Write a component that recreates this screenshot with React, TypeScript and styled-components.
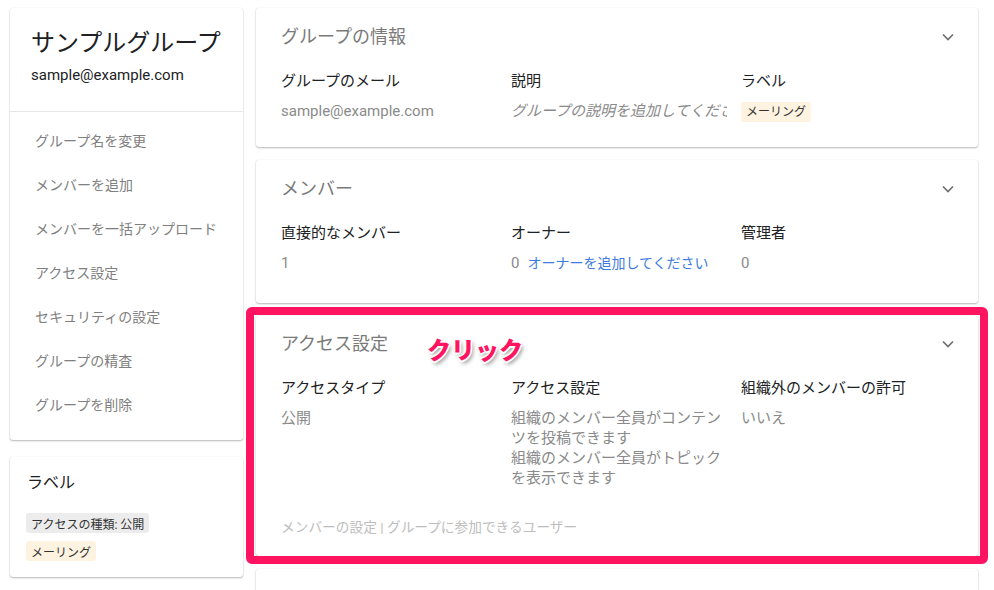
import React from "react";
import styled, { createGlobalStyle } from "styled-components";

const Global = createGlobalStyle`
  html, body { margin: 0; padding: 0; background: #ffffff; }
  body {
    font-family: Roboto, "Noto Sans CJK JP", "Noto Sans", sans-serif;
    color: #202124;
    width: 994px;
    height: 590px;
    overflow: hidden;
  }
  * { box-sizing: border-box; }
`;

const Page = styled.div`
  display: grid;
  grid-template-columns: 233px 722px;
  column-gap: 13px;
  padding: 8px 0 0 10px;
  align-items: start;
`;

const Column = styled.div<{ $gap: number }>`
  display: flex;
  flex-direction: column;
  gap: ${(p) => p.$gap}px;
`;

const Card = styled.div`
  position: relative;
  background: #fff;
  border-radius: 3px;
  box-shadow: 0 1px 2px rgba(0, 0, 0, 0.28), 0 0 1px rgba(0, 0, 0, 0.12);
`;

const GroupHeader = styled.div`
  padding: 19px 21px 26px;
  border-bottom: 1px solid #e6e6e6;
`;

const GroupTitle = styled.div`
  font-size: 24px;
  line-height: 32px;
  color: #202124;
`;

const GroupEmail = styled.div`
  margin-top: 6px;
  font-size: 15px;
  line-height: 20px;
  color: #202124;
`;

const Menu = styled.div`
  display: flex;
  flex-direction: column;
  padding: 6px 0 14px;
`;

const MenuItem = styled.div`
  height: 44px;
  display: flex;
  align-items: center;
  padding-left: 25px;
  font-size: 14px;
  color: #808080;
`;

const LabelCard = styled(Card)`
  padding: 16px 16px 16px;
`;

const LabelTitle = styled.div`
  font-size: 16px;
  line-height: 20px;
  margin-left: 1px;
  color: #202124;
`;

const ChipList = styled.div`
  display: flex;
  flex-direction: column;
  align-items: flex-start;
  gap: 8px;
  margin-top: 20px;
`;

const Chip = styled.span<{ $tone: "gray" | "orange" }>`
  display: inline-flex;
  align-items: center;
  height: 20px;
  padding: 0 5px;
  border-radius: 3px;
  font-size: 12px;
  color: #333;
  background: ${(p) => (p.$tone === "gray" ? "#ececec" : "#fdf3e0")};
`;

const SectionCard = styled(Card)<{ $pb: number; $top: number }>`
  padding: ${(p) => p.$top}px 24px ${(p) => p.$pb}px 25px;
`;

const SectionHead = styled.div`
  display: flex;
  align-items: center;
  justify-content: space-between;
  height: 24px;
`;

const SectionTitle = styled.div`
  font-size: 18px;
  line-height: 24px;
  color: #7a7a7a;
`;

const Fields = styled.div`
  display: grid;
  grid-template-columns: repeat(3, 230px);
  margin-top: 22px;
`;

const Field = styled.div`
  padding-right: 14px;
  min-width: 0;
`;

const FieldLabel = styled.div`
  font-size: 15px;
  line-height: 20px;
  color: #202124;
`;

const FieldValue = styled.div<{ $italic?: boolean }>`
  margin-top: 10px;
  font-size: 15px;
  line-height: 20px;
  color: #8a8a8a;
  font-style: ${(p) => (p.$italic ? "italic" : "normal")};
  white-space: ${(p) => (p.$italic ? "nowrap" : "normal")};
  overflow: hidden;
`;

const Link = styled.span`
  color: #3d7be0;
  margin-left: 8px;
  font-size: 14px;
`;

const Footer = styled.div`
  margin-top: 29px;
  font-size: 13.7px;
  line-height: 20px;
  color: #bdbdbd;
`;

const Highlight = styled.div`
  position: absolute;
  top: -9px;
  left: -10px;
  right: -10px;
  bottom: -8px;
  border: 8px solid #ff1461;
  border-radius: 6px;
  pointer-events: none;
`;

const Annotation = styled.div`
  position: absolute;
  left: 171px;
  top: 17px;
  font-family: "Noto Sans CJK JP", sans-serif;
  font-weight: 900;
  font-size: 24px;
  line-height: 32px;
  color: #ff1461;
  text-shadow: -1px -1px 0 #fff, 1px -1px 0 #fff, -1px 1px 0 #fff, 1px 1px 0 #fff,
    0 -1.5px 0 #fff, 0 1.5px 0 #fff, -1.5px 0 0 #fff, 1.5px 0 0 #fff,
    2px 3px 4px rgba(0, 0, 0, 0.45);
`;

const Chevron = () => (
  <svg width="12" height="8" viewBox="0 0 12 8">
    <path d="M1 1.5 L6 6.5 L11 1.5" fill="none" stroke="#707070" strokeWidth="1.7" />
  </svg>
);

const menuItems = [
  "グループ名を変更",
  "メンバーを追加",
  "メンバーを一括アップロード",
  "アクセス設定",
  "セキュリティの設定",
  "グループの精査",
  "グループを削除",
];

export default function App() {
  return (
    <>
      <Global />
      <Page>
        <Column $gap={17}>
          <Card>
            <GroupHeader>
              <GroupTitle>サンプルグループ</GroupTitle>
              <GroupEmail>sample@example.com</GroupEmail>
            </GroupHeader>
            <Menu>
              {menuItems.map((m) => (
                <MenuItem key={m}>{m}</MenuItem>
              ))}
            </Menu>
          </Card>
          <LabelCard>
            <LabelTitle>ラベル</LabelTitle>
            <ChipList>
              <Chip $tone="gray">アクセスの種類: 公開</Chip>
              <Chip $tone="orange">メーリング</Chip>
            </ChipList>
          </LabelCard>
        </Column>

        <Column $gap={13}>
          <SectionCard $top={17} $pb={25}>
            <SectionHead>
              <SectionTitle>グループの情報</SectionTitle>
              <Chevron />
            </SectionHead>
            <Fields>
              <Field>
                <FieldLabel>グループのメール</FieldLabel>
                <FieldValue>sample@example.com</FieldValue>
              </Field>
              <Field>
                <FieldLabel>説明</FieldLabel>
                <FieldValue $italic>グループの説明を追加してください</FieldValue>
              </Field>
              <Field>
                <FieldLabel>ラベル</FieldLabel>
                <FieldValue>
                  <Chip $tone="orange">メーリング</Chip>
                </FieldValue>
              </Field>
            </Fields>
          </SectionCard>

          <SectionCard $top={17} $pb={30}>
            <SectionHead>
              <SectionTitle>メンバー</SectionTitle>
              <Chevron />
            </SectionHead>
            <Fields>
              <Field>
                <FieldLabel>直接的なメンバー</FieldLabel>
                <FieldValue>1</FieldValue>
              </Field>
              <Field>
                <FieldLabel>オーナー</FieldLabel>
                <FieldValue>
                  0<Link>オーナーを追加してください</Link>
                </FieldValue>
              </Field>
              <Field>
                <FieldLabel>管理者</FieldLabel>
                <FieldValue>0</FieldValue>
              </Field>
            </Fields>
          </SectionCard>

          <SectionCard $top={16} $pb={19}>
            <SectionHead>
              <SectionTitle>アクセス設定</SectionTitle>
              <Chevron />
            </SectionHead>
            <Fields>
              <Field>
                <FieldLabel>アクセスタイプ</FieldLabel>
                <FieldValue>公開</FieldValue>
              </Field>
              <Field>
                <FieldLabel>アクセス設定</FieldLabel>
                <FieldValue>
                  組織のメンバー全員がコンテンツを投稿できます
                  <br />
                  組織のメンバー全員がトピックを表示できます
                </FieldValue>
              </Field>
              <Field>
                <FieldLabel>組織外のメンバーの許可</FieldLabel>
                <FieldValue>いいえ</FieldValue>
              </Field>
            </Fields>
            <Footer>メンバーの設定 | グループに参加できるユーザー</Footer>
            <Highlight />
            <Annotation>クリック</Annotation>
          </SectionCard>

          <SectionCard $top={16} $pb={80}>
            <SectionHead />
          </SectionCard>
        </Column>
      </Page>
    </>
  );
}
